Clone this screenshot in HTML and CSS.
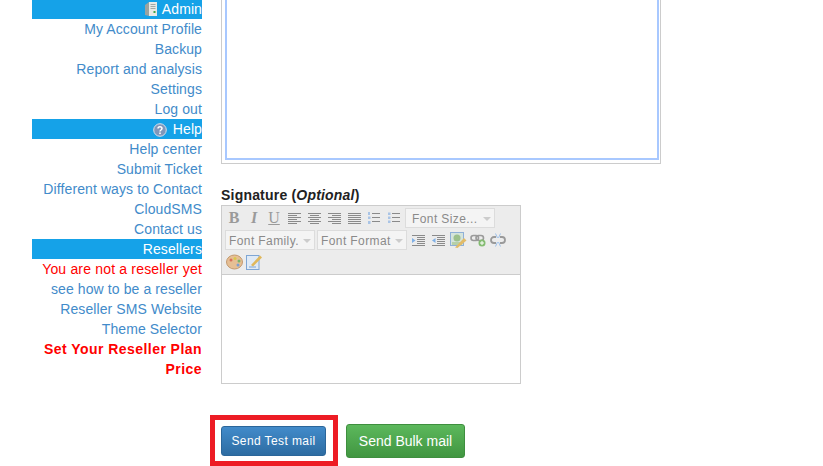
FILE: index.html
```html
<!DOCTYPE html>
<html lang="en">
<head>
  <meta charset="UTF-8" />
  <title>CloudSMS - Send Bulk mail</title>
  <link rel="stylesheet" href="styles.css">
</head>
<body>
  <!-- SIDEBAR -->
  <div class="sidebar">
    <div class="side-head">
      <svg class="head-icon" viewBox="0 0 12 16" width="12" height="16">
        <path d="M0 4 L4 1 V15 L0 14 Z" fill="#9aa3a0"/>
        <path d="M4 1 H12 V15 H4 Z" fill="#e8eae6"/>
        <path d="M5.500 3.500 H10.500 M5.500 5.500 H10.500 M5.500 7.500 H10.500" stroke="#a4aaa6"/>
        <rect x="8.500" y="10" width="2" height="2" fill="#3fa34a"/>
      </svg>
      Admin
    </div>
    <a class="side-link">My Account Profile</a>
    <a class="side-link">Backup</a>
    <a class="side-link">Report and analysis</a>
    <a class="side-link">Settings</a>
    <a class="side-link">Log out</a>
    <div class="side-head">
      <svg class="head-icon" viewBox="0 0 14 14" width="14" height="14">
        <circle cx="7" cy="7" r="6.300" fill="#7f97bb" stroke="#d5e0ec"/>
        <path d="M5 5.500 C5 3 9 3 9 5.500 C9 7 7 7 7 8.500" fill="none" stroke="#fff" stroke-width="1.500"/>
        <rect x="6.200" y="9.500" width="1.600" height="1.600" fill="#fff"/>
      </svg>
      Help
    </div>
    <a class="side-link">Help center</a>
    <a class="side-link">Submit Ticket</a>
    <a class="side-link">Different ways to Contact</a>
    <a class="side-link">CloudSMS</a>
    <a class="side-link">Contact us</a>
    <div class="side-head">Resellers</div>
    <a class="side-link side-red">You are not a reseller yet</a>
    <a class="side-link">see how to be a reseller</a>
    <a class="side-link">Reseller SMS Website</a>
    <a class="side-link">Theme Selector</a>
    <a class="side-link side-red side-bold">Set Your Reseller Plan Price</a>
  </div>

  <!-- MAIN -->
  <div class="main">
    <div class="body-editor">
      <div class="body-editor-inner"></div>
    </div>

    <label class="field-label">Signature (<em>Optional</em>)</label>
    <div class="editor">
      <div class="toolbar">
        <div class="tool-row">
          <span class="tool tool-b">B</span>
          <span class="tool tool-i">I</span>
          <span class="tool tool-u">U</span>
          <span class="tool"><svg width="13" height="13" viewBox="0 0 13 13"><path d="M0 1.500H13M0 3.500H9M0 5.500H13M0 7.500H9M0 9.500H13M0 11.500H9" stroke="#8a8a8a"/></svg></span>
          <span class="tool"><svg width="13" height="13" viewBox="0 0 13 13"><path d="M0 1.500H13M2 3.500H11M0 5.500H13M2 7.500H11M0 9.500H13M2 11.500H11" stroke="#8a8a8a"/></svg></span>
          <span class="tool"><svg width="13" height="13" viewBox="0 0 13 13"><path d="M0 1.500H13M4 3.500H13M0 5.500H13M4 7.500H13M0 9.500H13M4 11.500H13" stroke="#8a8a8a"/></svg></span>
          <span class="tool"><svg width="13" height="13" viewBox="0 0 13 13"><path d="M0 1.500H13M0 3.500H13M0 5.500H13M0 7.500H13M0 9.500H13M0 11.500H13" stroke="#8a8a8a"/></svg></span>
          <span class="tool"><svg width="14" height="14" viewBox="0 0 14 14"><path d="M5 2.500H13M5 6.500H13M5 10.500H13" stroke="#8a8a8a"/><path d="M1 1H3V4H1ZM1 5.500H3.500V8H1ZM1 10H3.500V13H1Z" fill="#a9c4e6"/></svg></span>
          <span class="tool"><svg width="14" height="14" viewBox="0 0 14 14"><path d="M5 2.500H13M5 6.500H13M5 10.500H13" stroke="#8a8a8a"/><path d="M1 1.500H3.500V4H1ZM1 5.500H3.500V8H1ZM1 9.500H3.500V12H1Z" fill="#a9c4e6"/></svg></span>
          <span class="sel sel-size">Font Size...<i class="caret"></i></span>
        </div>
        <div class="tool-row row-two">
          <span class="sel">Font Family.<i class="caret"></i></span>
          <span class="sel sel-format">Font Format<i class="caret"></i></span>
          <span class="tool"><svg width="13" height="13" viewBox="0 0 13 13"><path d="M0 1.500H13M5 3.500H13M5 5.500H13M5 7.500H13M5 9.500H13M0 11.500H13" stroke="#8a8a8a"/><path d="M0 4L3.500 6.500L0 9Z" fill="#7fb0e6"/></svg></span>
          <span class="tool"><svg width="13" height="13" viewBox="0 0 13 13"><path d="M0 1.500H13M5 3.500H13M5 5.500H13M5 7.500H13M5 9.500H13M0 11.500H13" stroke="#8a8a8a"/><path d="M3.500 4L0 6.500L3.500 9Z" fill="#7fb0e6"/></svg></span>
          <span class="tool"><svg width="17" height="16" viewBox="0 0 17 16"><rect x=".5" y=".5" width="13" height="13" fill="#d5e4dc" stroke="#8fb0d8"/><circle cx="7" cy="6" r="3.500" fill="#9cc08c"/><path d="M2 10H12V13H2Z" fill="#b6d0a8"/><path d="M5 15.500L14 6L16.500 8.500L7.500 16Z" fill="#e2bb68"/></svg></span>
          <span class="tool"><svg width="16" height="14" viewBox="0 0 16 14"><rect x="1" y="2.500" width="7.500" height="5" rx="2.500" fill="none" stroke="#9a9a9a" stroke-width="1.600"/><rect x="6" y="2.500" width="7.500" height="5" rx="2.500" fill="none" stroke="#9a9a9a" stroke-width="1.600"/><circle cx="12" cy="10" r="3.500" fill="#84bc72"/><path d="M10 10H14M12 8V12" stroke="#fff"/></svg></span>
          <span class="tool"><svg width="16" height="14" viewBox="0 0 16 14"><path d="M6 4H4A3 3 0 0 0 4 10H6M10 4H12A3 3 0 0 1 12 10H10" fill="none" stroke="#9a9a9a" stroke-width="1.800"/><path d="M5.500 0.500L7.500 5M10.500 0.500L8.500 5M5.500 13.500L7.500 9M10.500 13.500L8.500 9" stroke="#9cc0ea"/></svg></span>
        </div>
        <div class="tool-row">
          <span class="tool"><svg width="17" height="16" viewBox="0 0 17 16"><ellipse cx="8.500" cy="8" rx="8" ry="7" fill="#e6bf94" stroke="#c39a70"/><circle cx="5" cy="6" r="1.500" fill="#d9705a"/><circle cx="9" cy="4.500" r="1.500" fill="#d8c84c"/><circle cx="13" cy="7" r="1.500" fill="#7bb46a"/><circle cx="12" cy="11" r="1.500" fill="#7c9ed2"/></svg></span>
          <span class="tool"><svg width="16" height="16" viewBox="0 0 16 16"><rect x=".5" y="1.500" width="12.500" height="14" fill="#dfeaf6" stroke="#7ea6d4"/><path d="M3 13H10" stroke="#7ea6d4"/><path d="M5 11L14 1.500L16 3.500L7 12.500Z" fill="#e0b85c"/></svg></span>
        </div>
      </div>
      <div class="editor-area"></div>
    </div>

    <!-- BOTOES -->
    <div class="actions">
      <div class="mark">
        <button class="btn btn-blue">Send Test mail</button>
      </div>
      <button class="btn btn-green">Send Bulk mail</button>
    </div>
  </div>
</body>
</html>
```

FILE: styles.css
```css
body {
  font-family: 'Liberation Sans', Arial, sans-serif;
  font-size: 14px;
  margin: 0;
  height: 466px;
  overflow: hidden;
  background: #ffffff;
  display: flex;
  align-items: flex-start;
}

.sidebar {
  width: 170px;
  margin-top: -1px;
  margin-left: 32px;
  text-align: right;
  letter-spacing: 0.1px;
}

.side-head {
  background: #15a2e8;
  color: #ffffff;
  line-height: 20px;
}

.head-icon {
  vertical-align: -3px;
  margin-right: 2px;
}

.side-link {
  display: block;
  color: #428bca;
  line-height: 20px;
}

.side-red {
  color: #ff0000;
  letter-spacing: 0.18px;
}

.side-bold {
  font-weight: bold;
  letter-spacing: 0.45px;
}

.main {
  width: 440px;
  margin-left: 19px;
}

.body-editor {
  height: 164px;
  box-sizing: border-box;
  border: 1px solid #cccccc;
  border-top: none;
  padding: 0 1px 3px 3px;
}

.body-editor-inner {
  height: 100%;
  box-sizing: border-box;
  border: 2px solid #a8c8ff;
  border-top: none;
}

.field-label {
  display: block;
  margin-top: 22px;
  margin-bottom: 1px;
  line-height: 18px;
  font-weight: bold;
  color: #222222;
  letter-spacing: 0.2px;
}

.editor {
  width: 300px;
  box-sizing: border-box;
  border: 1px solid #cccccc;
}

.toolbar {
  height: 69px;
  box-sizing: border-box;
  background: #ececec;
  border-bottom: 1px solid #cccccc;
  padding: 2px 0 0 2px;
}

.tool-row {
  display: flex;
  align-items: center;
  height: 20px;
  margin-bottom: 2px;
}

.row-two {
  padding-left: 1px;
}

.tool {
  flex: 0 0 20px;
  width: 20px;
  height: 20px;
  display: flex;
  align-items: center;
  justify-content: center;
  font-family: 'Liberation Serif', serif;
  font-size: 16px;
  color: #9a9a9a;
}

.tool-b {
  font-weight: bold;
}

.tool-i {
  font-style: italic;
  font-weight: bold;
}

.tool-u {
  text-decoration: underline;
}

.sel {
  width: 90px;
  height: 20px;
  box-sizing: border-box;
  display: flex;
  align-items: center;
  justify-content: space-between;
  padding: 1px 3px 0 3px;
  background: #f4f4f4;
  border: 1px solid #dcdcdc;
  font-size: 12px;
  letter-spacing: 0.4px;
  color: #8a8a8a;
  white-space: nowrap;
}

.sel-size {
  margin-left: 1px;
  padding-left: 6px;
}

.sel-format {
  margin: 0 1px 0 2px;
}

.caret {
  width: 0;
  height: 0;
  border-left: 4px solid transparent;
  border-right: 4px solid transparent;
  border-top: 4px solid #cccccc;
}

.editor-area {
  height: 108px;
}

.actions {
  display: flex;
  align-items: center;
  margin-top: 31px;
  margin-left: -11px;
  gap: 8px;
}

.mark {
  border: 5px solid #ed1c24;
  padding: 6px 7px 5px 6px;
}

.btn {
  display: block;
  border-radius: 3px;
  color: #ffffff;
  font-family: 'Liberation Sans', Arial, sans-serif;
  cursor: pointer;
}

.btn-blue {
  width: 105px;
  height: 30px;
  font-size: 12px;
  letter-spacing: 0.4px;
  padding: 0;
  background: linear-gradient(to bottom, #428bca, #2d6ca2);
  border: 1px solid #2b669a;
}

.btn-green {
  width: 119px;
  height: 34px;
  font-size: 14px;
  padding: 0;
  background: linear-gradient(to bottom, #5cb85c, #419641);
  border: 1px solid #3e8f3e;
}
```
